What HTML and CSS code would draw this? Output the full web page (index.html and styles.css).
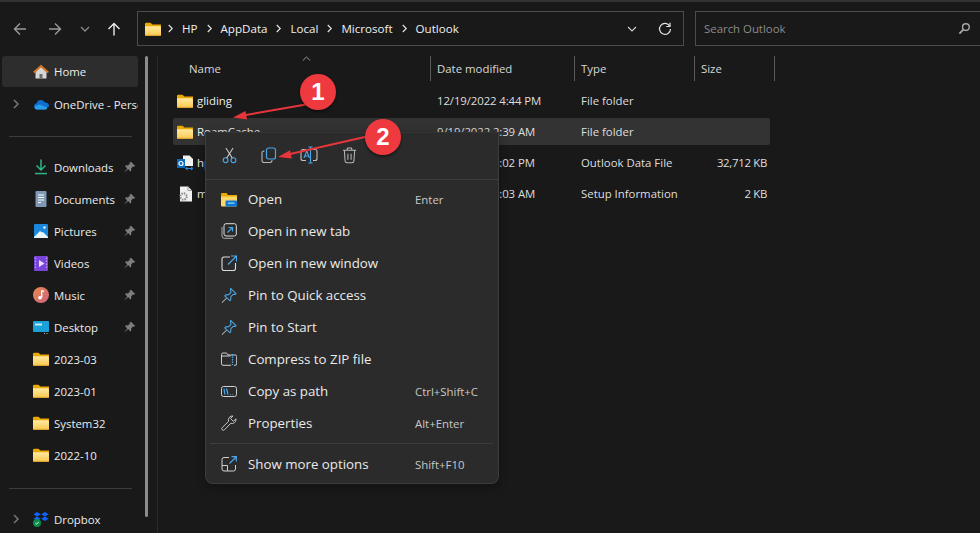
FILE: index.html
```html
<!DOCTYPE html>
<html lang="en">
<head>
<meta charset="utf-8">
<title>Outlook - File Explorer</title>
<link rel="stylesheet" href="styles.css">
</head>
<body>
<svg class="defs" width="0" height="0" aria-hidden="true">
  <defs>
    <linearGradient id="fg" x1="0" y1="0" x2="0" y2="1"><stop offset="0" stop-color="#ffe9a0"/><stop offset="1" stop-color="#fcc94f"/></linearGradient>
    <symbol id="folder" viewBox="0 0 16 14">
      <path d="M0 2a1.2 1.2 0 0 1 1.2-1.2h4.3L7.4 2.6H16V5H0z" fill="#eba800"/>
      <path d="M0 4.2h14.8A1.2 1.2 0 0 1 16 5.400V12.600a1.200 1.200 0 0 1-1.200 1.200H1.200A1.200 1.200 0 0 1 0 12.600z" fill="url(#fg)"/>
      <rect y="12.800" width="16" height="1" fill="#e0a52e"/>
    </symbol>
    <symbol id="pin" viewBox="0 0 12 12">
      <path d="M7 .8l4.200 4.200-1.100.8-1-.3-2 2 .2 2-.9.9-2.300-2.300L1 11l-.3-.3 2.500-3.300L1 5.100l.9-.9 2 .2 2-2-.3-1z" fill="#7d7d7d"/>
    </symbol>
    <symbol id="chev" viewBox="0 0 8 10">
      <path d="M2 1l4 4-4 4" fill="none" stroke="#e6e6e6" stroke-width="1.300"/>
    </symbol>
    <symbol id="navchev" viewBox="0 0 8 10">
      <path d="M2 1l4 4-4 4" fill="none" stroke="#777" stroke-width="1.500"/>
    </symbol>
    <symbol id="menupin" viewBox="0 0 18 18">
      <path d="M10.800 1l6.200 5.800-1 .9-2.300-.1-2.600 2.700-.2 3.600-1 1L4.200 9.300l1-1 3.700-.3 2.300-2.500-.4-2.500z" fill="none" stroke="#4aa8e8" stroke-width="1.200" stroke-linejoin="round"/>
      <path d="M6.300 12L1 17" stroke="#ddd" stroke-width="1.100"/>
    </symbol>
  </defs>
</svg>

<div class="window">
  <header class="toolbar">
    <div class="navbtns">
      <svg class="tb-icon back" viewBox="0 0 14 14" width="14" height="14"><path d="M13 7H1.500M7 1.500L1.500 7 7 12.500" fill="none" stroke="#9a9a9a" stroke-width="1.400"/></svg>
      <svg class="tb-icon fwd" viewBox="0 0 14 14" width="14" height="14"><path d="M1 7h11.500M7 1.500L12.500 7 7 12.500" fill="none" stroke="#9a9a9a" stroke-width="1.400"/></svg>
      <svg class="tb-icon down" viewBox="0 0 10 6" width="10" height="6"><path d="M1 1l4 4 4-4" fill="none" stroke="#8a8a8a" stroke-width="1.300"/></svg>
      <svg class="tb-icon up" viewBox="0 0 14 14" width="14" height="14"><path d="M7 13.500V1.500M1.500 7L7 1.500 12.500 7" fill="none" stroke="#ececec" stroke-width="1.400"/></svg>
    </div>
    <div class="address">
      <svg class="addr-folder" width="16" height="14"><use href="#folder"/></svg>
      <nav class="crumbs">
        <svg class="cv" width="7" height="9"><use href="#chev"/></svg><span class="crumb">HP</span>
        <svg class="cv" width="7" height="9"><use href="#chev"/></svg><span class="crumb">AppData</span>
        <svg class="cv" width="7" height="9"><use href="#chev"/></svg><span class="crumb">Local</span>
        <svg class="cv" width="7" height="9"><use href="#chev"/></svg><span class="crumb">Microsoft</span>
        <svg class="cv" width="7" height="9"><use href="#chev"/></svg><span class="crumb">Outlook</span>
      </nav>
      <svg class="addr-drop" viewBox="0 0 10 6" width="10" height="6"><path d="M1 1l4 4 4-4" fill="none" stroke="#cfcfcf" stroke-width="1.100"/></svg>
      <svg class="addr-refresh" viewBox="0 0 14 14" width="14" height="14"><path d="M11.800 4.200A5.500 5.500 0 1 0 12.500 7" fill="none" stroke="#e4e4e4" stroke-width="1.200"/><path d="M12 .8v3.700H8.300" fill="none" stroke="#e4e4e4" stroke-width="1.200"/></svg>
    </div>
    <div class="search">
      <span class="search-text">Search Outlook</span>
      <svg class="search-icon" viewBox="0 0 14 14" width="13" height="13"><circle cx="8.500" cy="5.500" r="3.600" fill="none" stroke="#a8a8a8" stroke-width="1.500"/><path d="M6 8L1.500 12.500" stroke="#a8a8a8" stroke-width="2"/></svg>
    </div>
  </header>

  <div class="main">
    <aside class="sidebar">
      <div class="navlist">
        <div class="nav-row active">
          <span class="nav-exp"></span>
          <svg class="nav-ico" viewBox="0 0 16 16" width="16" height="16"><path d="M2.500 8v6.500h11V8L8 3z" fill="#d8d8d8"/><rect x="6.500" y="10" width="3" height="4.500" fill="#6c6c6c"/><path d="M.7 8.500L8 1.800l7.300 6.700" fill="none" stroke="#e4761e" stroke-width="1.700"/></svg>
          <span class="nav-label">Home</span>
        </div>
        <div class="nav-row">
          <svg class="nav-exp" width="8" height="10"><use href="#navchev"/></svg>
          <svg class="nav-ico" viewBox="0 0 16 11" width="16" height="11"><path d="M4 10.500A3.200 3.200 0 0 1 3.500 4.200 4.600 4.600 0 0 1 12 3.500 3.500 3.500 0 0 1 16 7v.5l-5 3z" fill="#0f6fd1"/><path d="M3.500 10.500A2 2 0 0 1 2.500 7L6.500 5.500 14 8.500c.5 1.200-.5 2-1.200 2z" fill="#2a9fe8"/></svg>
          <span class="nav-label nav-clip">OneDrive - Personal</span>
        </div>
        <div class="nav-sep first"></div>
        <div class="nav-row">
          <span class="nav-exp"></span>
          <svg class="nav-ico" viewBox="0 0 16 16" width="16" height="16"><path d="M8 .5v10M3.500 6.500L8 11l4.500-4.500" fill="none" stroke="#2bb58b" stroke-width="1.500"/><rect x="2" y="13.800" width="12" height="1.500" fill="#2bb58b"/></svg>
          <span class="nav-label">Downloads</span>
          <svg class="nav-pin" width="12" height="12"><use href="#pin"/></svg>
        </div>
        <div class="nav-row">
          <span class="nav-exp"></span>
          <svg class="nav-ico" viewBox="0 0 16 16" width="16" height="16"><rect x="2.500" width="11" height="16" rx="1" fill="#7f99b5"/><path d="M5 4h6M5 6.500h6M5 9h6M5 11.500h3" stroke="#fff" stroke-width="1"/></svg>
          <span class="nav-label">Documents</span>
          <svg class="nav-pin" width="12" height="12"><use href="#pin"/></svg>
        </div>
        <div class="nav-row">
          <span class="nav-exp"></span>
          <svg class="nav-ico" viewBox="0 0 16 16" width="16" height="16"><rect x="1" y="1" width="14" height="14" rx="1" fill="#1a86dc"/><path d="M1 14l6-6 2 1.500 1-.5 5 5v1H1z" fill="#e8f4fc"/><circle cx="11.500" cy="4.500" r="1.200" fill="#e8f4fc"/></svg>
          <span class="nav-label">Pictures</span>
          <svg class="nav-pin" width="12" height="12"><use href="#pin"/></svg>
        </div>
        <div class="nav-row">
          <span class="nav-exp"></span>
          <svg class="nav-ico" viewBox="0 0 16 16" width="16" height="16"><rect x="1" y="1" width="14" height="15" rx="1" fill="#7a44d8"/><path d="M6 5l5.500 3.500L6 12z" fill="#eadfff"/><path d="M2.500 2.500v12M13.500 2.500v12" stroke="#b596f0" stroke-width="1.200" stroke-dasharray="1.500 1.500"/></svg>
          <span class="nav-label">Videos</span>
          <svg class="nav-pin" width="12" height="12"><use href="#pin"/></svg>
        </div>
        <div class="nav-row">
          <span class="nav-exp"></span>
          <svg class="nav-ico" viewBox="0 0 16 16" width="16" height="16"><defs><linearGradient id="mg" x1="0" y1="0" x2="1" y2="1"><stop offset="0" stop-color="#e98a4e"/><stop offset="1" stop-color="#c9637f"/></linearGradient></defs><circle cx="8" cy="8" r="8" fill="url(#mg)"/><path d="M8.700 3.500V10.500" stroke="#fff" stroke-width="1.300"/><path d="M8.700 3.500l2.500 1" stroke="#fff" stroke-width="1.300"/><circle cx="7" cy="10.800" r="1.800" fill="#fff"/></svg>
          <span class="nav-label">Music</span>
          <svg class="nav-pin" width="12" height="12"><use href="#pin"/></svg>
        </div>
        <div class="nav-row">
          <span class="nav-exp"></span>
          <svg class="nav-ico" viewBox="0 0 16 13" width="16" height="13"><rect y="0" width="16" height="11" rx="1" fill="#1ba1d8"/><rect x="2" y="2.500" width="7" height="2" fill="#bfeaf7"/><path d="M11 12.500h1M13.500 12.500h1" stroke="#bbb"/></svg>
          <span class="nav-label">Desktop</span>
          <svg class="nav-pin" width="12" height="12"><use href="#pin"/></svg>
        </div>
        <div class="nav-row"><span class="nav-exp"></span><svg class="nav-ico" width="16" height="14"><use href="#folder"/></svg><span class="nav-label">2023-03</span></div>
        <div class="nav-row"><span class="nav-exp"></span><svg class="nav-ico" width="16" height="14"><use href="#folder"/></svg><span class="nav-label">2023-01</span></div>
        <div class="nav-row"><span class="nav-exp"></span><svg class="nav-ico" width="16" height="14"><use href="#folder"/></svg><span class="nav-label">System32</span></div>
        <div class="nav-row"><span class="nav-exp"></span><svg class="nav-ico" width="16" height="14"><use href="#folder"/></svg><span class="nav-label">2022-10</span></div>
        <div class="nav-sep last"></div>
        <div class="nav-row">
          <svg class="nav-exp" width="8" height="10"><use href="#navchev"/></svg>
          <svg class="nav-ico" viewBox="0 0 16 16" width="16" height="16"><path d="M4 1L0.500 3.200 4 5.500 7.800 3.200zM12 1L8.200 3.200 12 5.500l3.500-2.300zM0.500 7.800L4 10l3.800-2.200L4 5.500zM12 5.500L8.200 7.800 12 10l3.500-2.200z" fill="#0f62fe"/><circle cx="4" cy="12" r="4" fill="#0b8a4b"/><path d="M2.300 12l1.200 1.200L5.700 11" fill="none" stroke="#fff" stroke-width=".9"/></svg>
          <span class="nav-label">Dropbox</span>
        </div>
      </div>
      <div class="nav-scroll"></div>
    </aside>

    <section class="files">
      <div class="list-head">
        <div class="col col-name">Name<svg class="sort" viewBox="0 0 9 5" width="9" height="5"><path d="M.8 4.500L4.500 1l3.700 3.500" fill="none" stroke="#9a9a9a"/></svg></div>
        <div class="col col-sep">Date modified</div>
        <div class="col col-sep">Type</div>
        <div class="col col-sep col-size">Size</div>
      </div>
      <div class="rows">
        <div class="row">
          <div class="f-name"><svg width="16" height="14"><use href="#folder"/></svg><span>gliding</span></div>
          <div class="f-date">12/19/2022 4:44 PM</div><div class="f-type">File folder</div><div class="f-size"></div>
        </div>
        <div class="row selected">
          <div class="f-name"><svg width="16" height="14"><use href="#folder"/></svg><span>RoamCache</span></div>
          <div class="f-date">9/19/2022 2:39 AM</div><div class="f-type">File folder</div><div class="f-size"></div>
        </div>
        <div class="row">
          <div class="f-name"><svg viewBox="0 0 16 16" width="16" height="16"><path d="M6 .5h6.500L16 4v7H6z" fill="#f2f2f2"/><rect x="0" y="4" width="8" height="9" fill="#0f6cbd"/><circle cx="4" cy="8.500" r="2" fill="none" stroke="#fff" stroke-width="1.200"/><path d="M9 13.500h6.500M10.500 12l-2 1.500 2 1.500M14 12l2 1.500-2 1.500" fill="none" stroke="#2a8fe0" stroke-width="1"/></svg><span>hp@outlook.com.ost</span></div>
          <div class="f-date">9/19/2022 3:02 PM</div><div class="f-type">Outlook Data File</div><div class="f-size">32,712 KB</div>
        </div>
        <div class="row">
          <div class="f-name"><svg viewBox="0 0 16 16" width="16" height="16"><path d="M3 .5h8L15 4.500V15.500H3z" fill="#f0f0f0"/><path d="M11 .5v4h4" fill="none" stroke="#999"/><circle cx="6.500" cy="10.500" r="3.200" fill="none" stroke="#8a8a8a" stroke-width="2" stroke-dasharray="1.500 1"/></svg><span>mapisvc.inf</span></div>
          <div class="f-date">9/19/2022 3:03 AM</div><div class="f-type">Setup Information</div><div class="f-size">2 KB</div>
        </div>
      </div>
    </section>
  </div>

  <div class="menu">
    <div class="menu-top">
      <span class="mt-btn"><svg viewBox="0 0 16 18" width="15" height="17"><circle cx="3.800" cy="14" r="2.600" fill="none" stroke="#4aa8e8" stroke-width="1.200"/><circle cx="12.200" cy="14" r="2.600" fill="none" stroke="#4aa8e8" stroke-width="1.200"/><path d="M5 11.800L11.800 1M11 11.800L4.200 1" stroke="#c8c8c8" stroke-width="1.100" fill="none"/></svg></span>
      <span class="mt-btn"><svg viewBox="0 0 16 16" width="16" height="16"><path d="M3.500 4H3a2 2 0 0 0-2 2v7.500a2 2 0 0 0 2 2h6a2 2 0 0 0 2-2V13" fill="none" stroke="#b5b5b5" stroke-width="1.100"/><rect x="5.500" y="1" width="9" height="11" rx="2" fill="none" stroke="#4aa8e8" stroke-width="1.200"/></svg></span>
      <span class="mt-btn"><svg viewBox="0 0 18 18" width="18" height="18"><path d="M6 3.500H3a2 2 0 0 0-2 2v7a2 2 0 0 0 2 2h3M13 3.500h2a2 2 0 0 1 2 2v7a2 2 0 0 1-2 2h-2" fill="none" stroke="#c0c0c0" stroke-width="1.100"/><path d="M10.500 1v16M8.500 1h4M8.500 17h4" stroke="#4aa8e8" stroke-width="1.100" fill="none"/><path d="M4 12l2.800-7 2.700 7M5 10h3.500" fill="none" stroke="#4aa8e8" stroke-width="1.100"/></svg></span>
      <span class="mt-btn"><svg viewBox="0 0 16 18" width="15" height="17"><path d="M1 3.500h14M5.500 3.500V2a1 1 0 0 1 1-1h3a1 1 0 0 1 1 1v1.500M2.500 3.500l.8 11.500a2 2 0 0 0 2 1.700h5.400a2 2 0 0 0 2-1.700l.8-11.500M6.300 7v6.500M9.700 7v6.500" fill="none" stroke="#b8b8b8" stroke-width="1.100"/></svg></span>
    </div>
    <div class="menu-items">
      <div class="mi">
        <svg class="mi-ico" viewBox="0 0 16 15" width="16" height="15"><path d="M0 2a1 1 0 0 1 1-1h4.500L7 3h9v4H0z" fill="#eba800"/><path d="M0 4.500h16v9a1 1 0 0 1-1 1H1a1 1 0 0 1-1-1z" fill="#fcd768"/><rect x="4.500" y="8.500" width="11.500" height="6" rx="1" fill="#0f78d4"/><rect x="7" y="10.500" width="6.500" height="1.300" fill="#8fd0f7"/></svg>
        <span class="mi-label">Open</span><span class="mi-key">Enter</span>
      </div>
      <div class="mi">
        <svg class="mi-ico" viewBox="0 0 16 16" width="16" height="16"><rect x="3" y=".7" width="12.300" height="12.300" rx="2" fill="none" stroke="#dcdcdc" stroke-width="1"/><path d="M1 4v9a2.300 2.300 0 0 0 2.300 2.300H12" fill="none" stroke="#aaa" stroke-width="1"/><path d="M6.500 9.500l5-5M7.500 4.500h4v4" fill="none" stroke="#4aa8e8" stroke-width="1.200"/></svg>
        <span class="mi-label">Open in new tab</span>
      </div>
      <div class="mi">
        <svg class="mi-ico" viewBox="0 0 16 16" width="16" height="16"><path d="M9 2H3a2 2 0 0 0-2 2v9.500a2 2 0 0 0 2 2h9.500a2 2 0 0 0 2-2V8" fill="none" stroke="#dcdcdc" stroke-width="1.100"/><path d="M7 9.500L15 1.500M10 1h5.500v5.500" fill="none" stroke="#4aa8e8" stroke-width="1.200"/></svg>
        <span class="mi-label">Open in new window</span>
      </div>
      <div class="mi">
        <svg class="mi-ico" width="17" height="17"><use href="#menupin"/></svg>
        <span class="mi-label">Pin to Quick access</span>
      </div>
      <div class="mi">
        <svg class="mi-ico" width="17" height="17"><use href="#menupin"/></svg>
        <span class="mi-label">Pin to Start</span>
      </div>
      <div class="mi">
        <svg class="mi-ico" viewBox="0 0 16 14" width="16" height="14"><path d="M10 13.300H2a1.500 1.500 0 0 1-1.500-1.500V2.500A1.500 1.500 0 0 1 2 1h3.500L7 3h7.500A1.500 1.500 0 0 1 15.700 4.500v7.300a1.500 1.500 0 0 1-1.500 1.500H13M.5 4h9" fill="none" stroke="#d0d0d0" stroke-width="1"/><path d="M11.500 2v11" stroke="#4aa8e8" stroke-width="1.300" stroke-dasharray="1.500 1"/></svg>
        <span class="mi-label">Compress to ZIP file</span>
      </div>
      <div class="mi">
        <svg class="mi-ico" viewBox="0 0 16 11" width="16" height="11"><rect x=".5" y=".5" width="15" height="10" rx="2" fill="none" stroke="#d0d0d0"/><path d="M3 2.500l.8 6M5.500 2.500l1.500 6M9 8.500h.8M11.500 8.500h.8" stroke="#4aa8e8" stroke-width="1.200" fill="none"/></svg>
        <span class="mi-label">Copy as path</span><span class="mi-key">Ctrl+Shift+C</span>
      </div>
      <div class="mi">
        <svg class="mi-ico" viewBox="0 0 16 16" width="16" height="16"><path d="M15 4.500a4 4 0 0 1-5.300 3.800L3.500 14.800a1.500 1.500 0 0 1-2.300-2.200l6.400-6.300A4 4 0 0 1 12 1l-2.500 2.500 2.800 2.800L15 3.800z" fill="none" stroke="#c8c8c8" stroke-width="1"/></svg>
        <span class="mi-label">Properties</span><span class="mi-key">Alt+Enter</span>
      </div>
    </div>
    <div class="menu-sep"></div>
    <div class="mi more">
      <svg class="mi-ico" viewBox="0 0 16 16" width="16" height="16"><path d="M8 1.500H3a2 2 0 0 0-2 2V13a2 2 0 0 0 2 2h9.500a2 2 0 0 0 2-2V9M1 9.500h5.500V15" fill="none" stroke="#d0d0d0" stroke-width="1"/><path d="M8.500 7.500L15 1M10.500 .7H15.300V5.500" fill="none" stroke="#4aa8e8" stroke-width="1.200"/></svg>
      <span class="mi-label">Show more options</span><span class="mi-key">Shift+F10</span>
    </div>
  </div>

  <svg class="arrows" viewBox="0 0 980 533" width="980" height="533" aria-hidden="true">
    <path d="M306 104.500L243 115.500" stroke="#e6353b" stroke-width="2"/>
    <path d="M233 117.500l12.500-6.500 1.500 8.500z" fill="#e6353b"/>
    <path d="M367 136.500L288 154.500" stroke="#e6353b" stroke-width="2"/>
    <path d="M278 157l12-6.800 1.800 8.400z" fill="#e6353b"/>
  </svg>
  <div class="badge b1">1</div>
  <div class="badge b2">2</div>
</div>
</body>
</html>
```
FILE: styles.css
```css
* { box-sizing: border-box; }
html, body { margin: 0; padding: 0; background: #191919; }
body {
  font-family: "Open Sans", "Noto Sans", sans-serif;
  font-size: 11.4px;
  color: #ececec;
}
.defs { position: absolute; }
svg { display: block; flex: none; }

.window {
  position: relative;
  width: 980px;
  height: 533px;
  overflow: hidden;
  background: #191919;
  border-top: 2px solid #333;
}

/* toolbar */
.toolbar {
  display: flex;
  align-items: stretch;
  height: 54px;
  padding-top: 9px;
  padding-bottom: 10px;
}
.navbtns {
  display: flex;
  flex: none;
  align-items: center;
  width: 137px;
  padding-left: 13px;
}
.tb-icon.fwd { margin-left: 21px; }
.tb-icon.down { margin-left: 18px; }
.tb-icon.up { margin-left: 17px; }

.address {
  display: flex;
  flex: none;
  align-items: center;
  width: 547px;
  border: 1px solid #4c4c4c;
  padding-left: 7px;
}
.addr-folder { margin-right: 6px; }
.crumbs { display: flex; align-items: center; color: #f0f0f0; font-size: 11.6px; }
.cv { margin-right: 8px; }
.crumb { margin-right: 8px; }
.addr-drop { margin-left: auto; margin-right: 21px; }
.addr-refresh { margin-right: 11px; }

.search {
  display: flex;
  align-items: center;
  justify-content: space-between;
  width: 290px;
  margin-left: 11px;
  border: 1px solid #4c4c4c;
  padding-left: 8px;
  padding-right: 13px;
  color: #8b8b8b;
  flex: none;
}

/* main */
.main { display: flex; height: 477px; }

.sidebar {
  position: relative;
  width: 158px;
  flex: none;
  border-right: 1px solid #2a2a2a;
  padding-left: 2px;
}
.navlist { width: 136px; }
.nav-row {
  display: flex;
  align-items: center;
  height: 32px;
  border-radius: 3px;
  white-space: nowrap;
  overflow: hidden;
}
.nav-row.active { height: 31px; background: #2d2d2d; margin-bottom: 1px; }
.nav-exp { width: 8px; height: 10px; margin-left: 10px; flex: none; }
.nav-ico { margin-left: 13px; }
.nav-label { margin-left: 5px; flex: 1 1 auto; overflow: hidden; }
.nav-pin { margin-left: auto; margin-right: 2px; }
.nav-sep { height: 1px; background: #3c3c3c; margin-left: 7px; margin-right: 6px; }
.nav-sep.first { margin-top: 16px; margin-bottom: 14px; }
.nav-sep.last { margin-top: 17px; margin-bottom: 14px; }
.nav-scroll {
  position: absolute;
  left: 145px;
  top: 0;
  width: 3px;
  height: 461px;
  background: #8c8c8c;
  border-radius: 2px;
}

.files { flex: 1; padding-left: 15px; }
.list-head {
  display: grid;
  grid-template-columns: 257px 144px 120px 81px;
  height: 25px;
  margin-bottom: 6px;
}
.col {
  display: flex;
  align-items: center;
  color: #d8d8d8;
  padding-left: 6px;
}
.col-name { position: relative; padding-left: 16px; }
.col-sep { border-left: 1px solid #5a5a5a; }
.col-size { border-right: 1px solid #5a5a5a; }
.sort { position: absolute; left: 129px; top: 0; }

.rows { display: flex; flex-direction: column; gap: 4px; width: 597px; }
.row {
  display: grid;
  grid-template-columns: 257px 144px 120px 70px;
  align-items: center;
  height: 27px;
  border-radius: 2px;
  color: #dedede;
}
.row.selected { background: #333; }
.f-name { display: flex; align-items: center; gap: 4px; padding-left: 4px; white-space: nowrap; overflow: hidden; color: #eee; }
.f-date, .f-type { padding-left: 7px; white-space: nowrap; }
.f-date { letter-spacing: -.1px; }
.f-size { text-align: right; white-space: nowrap; margin-right: -3px; letter-spacing: -.3px; }

/* context menu */
.menu {
  position: absolute;
  left: 205px;
  top: 130px;
  width: 294px;
  height: 352px;
  background: #2b2b2b;
  border: 1px solid #3d3d3d;
  border-top-color: #333;
  border-radius: 0 0 8px 8px;
  box-shadow: 0 2px 10px rgba(0,0,0,.35);
  font-size: 13.3px;
  color: #eaeaea;
}
.menu-top {
  display: flex;
  align-items: center;
  height: 47px;
  padding-left: 3px;
  padding-bottom: 2px;
  border-bottom: 1px solid #3d3d3d;
}
.mt-btn { display: flex; justify-content: center; width: 40px; }
.menu-items { display: flex; flex-direction: column; padding-top: 3px; }
.mi {
  display: flex;
  align-items: center;
  height: 32px;
  padding-left: 15px;
}
.mi-ico { margin-right: 11px; }
.mi-label { white-space: nowrap; }
.mi-key { margin-left: auto; width: 83px; font-size: 11.4px; color: #c8c8c8; white-space: nowrap; }
.mi .mi-ico { width: 16px; }
.menu-sep { height: 1px; background: #3d3d3d; margin: 4px 5px 0 4px; }
.more { margin-top: 4px; }

/* annotations */
.arrows { position: absolute; left: 0; top: -2px; pointer-events: none; }
.badge {
  position: absolute;
  width: 36px;
  height: 36px;
  border-radius: 50%;
  background: #ee3a3e;
  color: #fff;
  font-family: "Liberation Sans", sans-serif;
  font-weight: 700;
  font-size: 24px;
  line-height: 36px;
  text-align: center;
  box-shadow: 0 2px 3px rgba(0,0,0,.45);
}
.b1 { left: 300px; top: 72px; }
.b2 { left: 365px; top: 117px; }
```
